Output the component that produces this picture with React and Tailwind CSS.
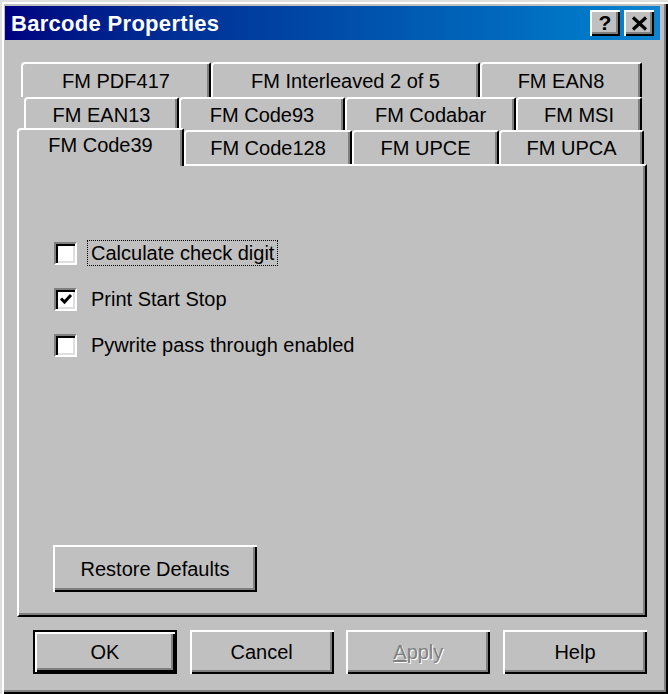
import React from 'react';

const raised = 'shadow-[inset_2px_2px_0_#ffffff,inset_-2px_-2px_0_#000000,inset_-4px_-4px_0_#808080]';

function Tab({ label, w, active }) {
  if (active) {
    return (
      <div className={`relative z-10 -mt-[2px] h-[38px] ${w} flex items-center justify-center pb-[6px] bg-[#c0c0c0] border-t-2 border-l-2 border-white border-r-2 border-r-black rounded-tl-[4px] rounded-tr-[2px] shadow-[inset_-2px_0_0_#808080]`}>
        {label}
      </div>
    );
  }
  return (
    <div className={`h-full ${w} flex items-center justify-center border-t-2 border-l-2 border-white border-r-2 border-r-black rounded-tl-[4px] rounded-tr-[2px] shadow-[inset_-2px_0_0_#808080]`}>
      {label}
    </div>
  );
}

function CheckRow({ label, checked, focused }) {
  return (
    <div className="flex items-center h-[26px]">
      <div className="w-[23px] h-[23px] bg-white border-2 border-t-[#808080] border-l-[#808080] border-r-white border-b-white shadow-[inset_2px_2px_0_#000000,inset_-2px_-2px_0_#dfdfdf] flex items-center justify-center">
        {checked && (
          <svg width="14" height="14" viewBox="0 0 14 14">
            <path d="M2 6.5 L5.5 10 L12 3" fill="none" stroke="#000" strokeWidth="3" />
          </svg>
        )}
      </div>
      <div className={`ml-[10px] px-[3px] h-[26px] flex items-center ${focused ? 'border border-dotted border-black' : 'border border-transparent'}`}>
        {label}
      </div>
    </div>
  );
}

function Button({ children, def, disabled, className = '' }) {
  return (
    <div className={`flex items-center justify-center bg-[#c0c0c0] ${def ? 'border-2 border-black' : ''} ${className}`}>
      <div className={`w-full h-full flex items-center justify-center ${raised} ${disabled ? 'text-[#808080] [text-shadow:1px_1px_0_#ffffff]' : ''}`}>
        {children}
      </div>
    </div>
  );
}

export default function App() {
  return (
    <div className="w-[668px] h-[694px] bg-[#c0c0c0] overflow-hidden font-['Liberation_Sans',Arial,sans-serif] text-[20px] text-black shadow-[inset_2px_2px_0_#dfdfdf,inset_4px_4px_0_#ffffff,inset_-2px_-2px_0_#000000,inset_-4px_-4px_0_#808080] pt-[6px] pl-[5px] pr-[8px] flex flex-col">
      {/* title bar */}
      <div className="h-[34px] flex items-center bg-gradient-to-r from-[#000080] to-[#1084d0] pl-[6px] pr-[6px]">
        <span className="text-white font-bold text-[22px] tracking-[0.3px]">Barcode Properties</span>
        <div className="ml-auto flex gap-[4px]">
          <div className={`w-[30px] h-[26px] bg-[#c0c0c0] ${raised} flex items-center justify-center font-bold text-[21px] leading-none pb-[1px]`}>?</div>
          <div className={`w-[30px] h-[26px] bg-[#c0c0c0] ${raised} flex items-center justify-center`}>
            <svg width="17" height="15" viewBox="0 0 17 15">
              <path d="M2 1.5 L15 13.5 M15 1.5 L2 13.5" stroke="#000" strokeWidth="3.2" fill="none" />
            </svg>
          </div>
        </div>
      </div>

      {/* tabs */}
      <div className="mt-[22px] -ml-[5px]">
        <div className="flex h-[35px] ml-[21px]">
          <Tab label="FM PDF417" w="w-[190px]" />
          <Tab label="FM Interleaved 2 of 5" w="w-[269px]" />
          <Tab label="FM EAN8" w="w-[162px]" />
        </div>
        <div className="flex h-[33px] ml-[24px]">
          <Tab label="FM EAN13" w="w-[155px]" />
          <Tab label="FM Code93" w="w-[166px]" />
          <Tab label="FM Codabar" w="w-[171px]" />
          <Tab label="FM MSI" w="w-[126px]" />
        </div>
        <div className="flex h-[34px] ml-[17px] items-start">
          <Tab label="FM Code39" w="w-[167px]" active />
          <Tab label="FM Code128" w="w-[168px]" />
          <Tab label="FM UPCE" w="w-[147px]" />
          <Tab label="FM UPCA" w="w-[145px]" />
        </div>

        {/* panel */}
        <div className="ml-[17px] w-[630px] h-[453px] border-t-2 border-l-2 border-white border-r-2 border-b-2 border-r-black border-b-black shadow-[inset_-2px_-2px_0_#808080] flex flex-col pt-[74px] pl-[35px]">
          <div className="flex flex-col gap-[20px]">
            <CheckRow label="Calculate check digit" focused />
            <CheckRow label="Print Start Stop" checked />
            <CheckRow label="Pywrite pass through enabled" />
          </div>
          <Button className="mt-auto mb-[23px] -ml-[1px] w-[204px] h-[47px]">Restore Defaults</Button>
        </div>

        {/* bottom buttons */}
        <div className="mt-[13px] ml-[33px] w-[614px] flex justify-between">
          <Button def className="w-[144px] h-[44px]">OK</Button>
          <Button className="w-[144px] h-[44px]">Cancel</Button>
          <Button disabled className="w-[144px] h-[44px]"><span><span className="underline">A</span>pply</span></Button>
          <Button className="w-[144px] h-[44px]">Help</Button>
        </div>
      </div>
    </div>
  );
}
